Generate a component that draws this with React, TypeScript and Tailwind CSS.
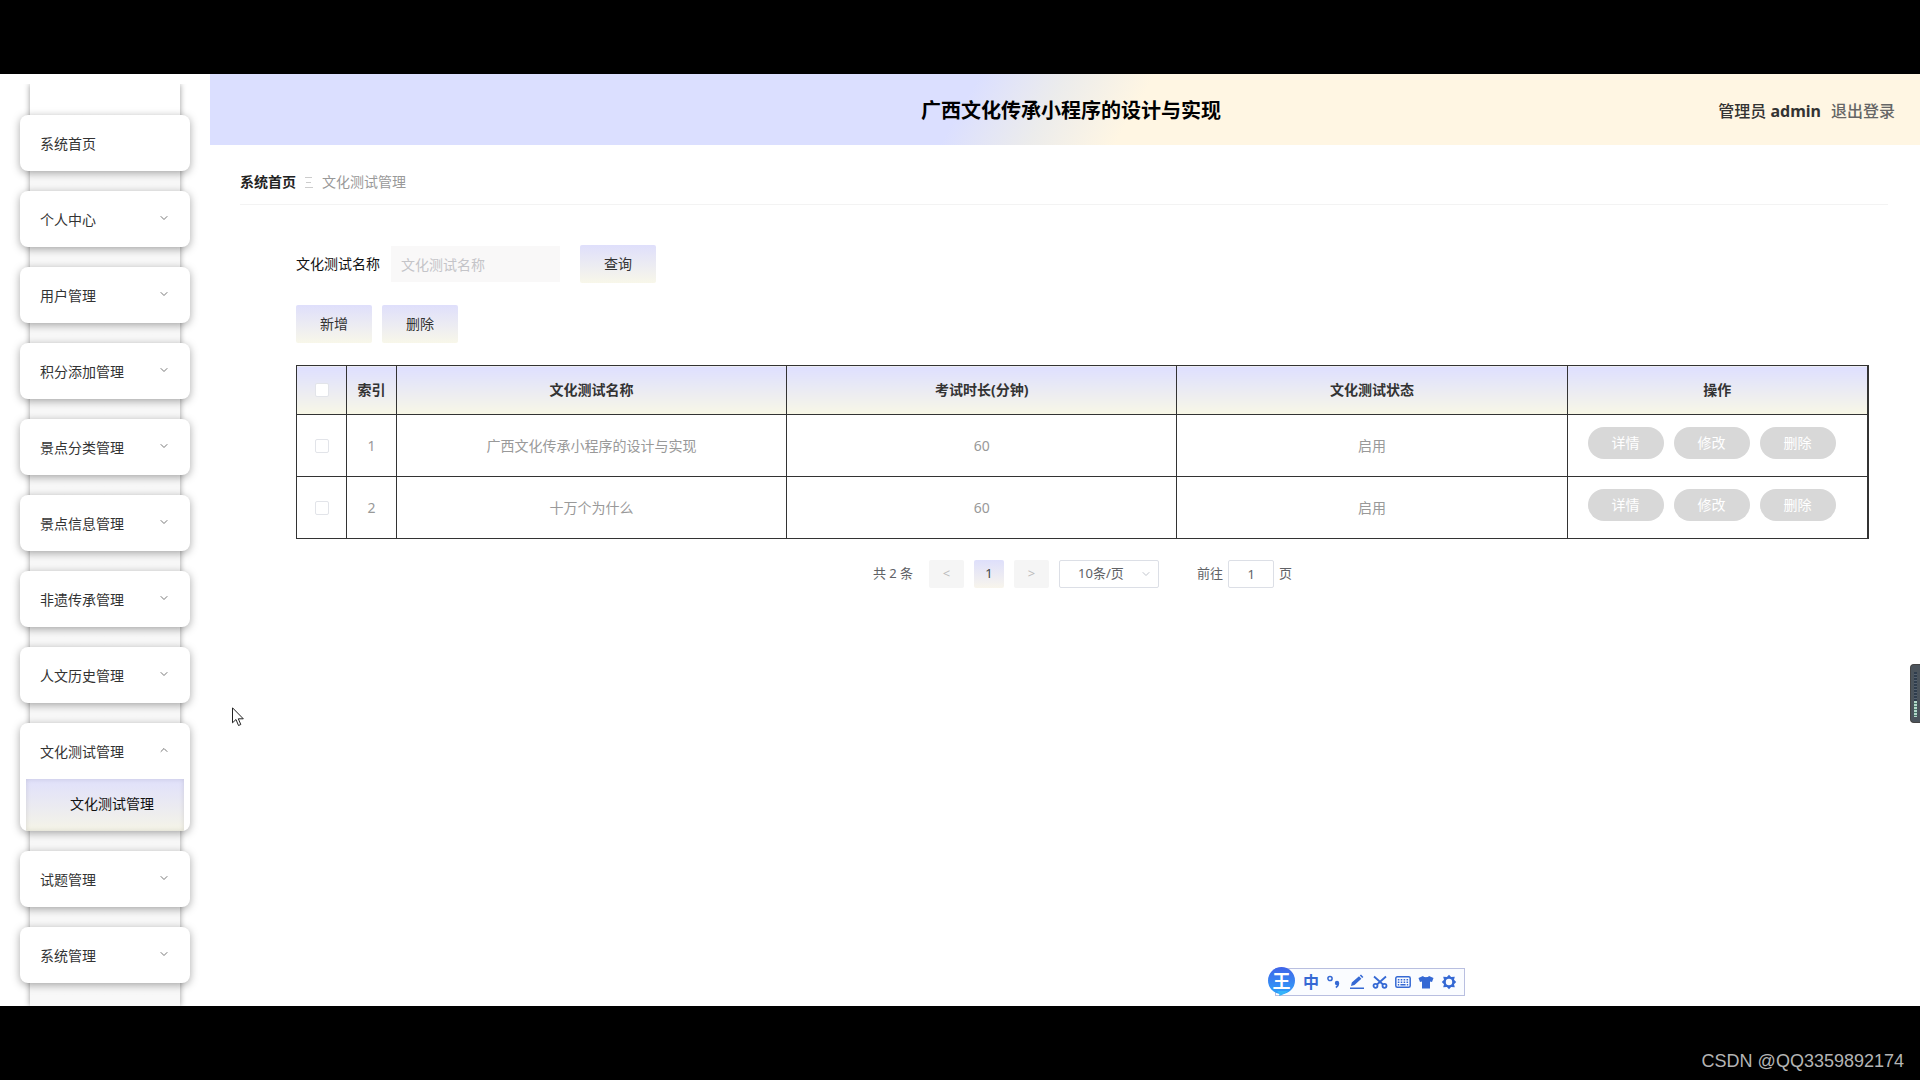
import React from 'react';
import { ChevronDown, ChevronUp } from 'lucide-react';

interface MenuItem {
  label: string;
  children?: string[];
  open?: boolean;
}

interface TestRow {
  id: number;
  name: string;
  duration: number;
  status: string;
}

const menu: MenuItem[] = [
  { label: '系统首页' },
  { label: '个人中心', children: [] },
  { label: '用户管理', children: [] },
  { label: '积分添加管理', children: [] },
  { label: '景点分类管理', children: [] },
  { label: '景点信息管理', children: [] },
  { label: '非遗传承管理', children: [] },
  { label: '人文历史管理', children: [] },
  { label: '文化测试管理', children: ['文化测试管理'], open: true },
  { label: '试题管理', children: [] },
  { label: '系统管理', children: [] },
];

const rows: TestRow[] = [
  { id: 1, name: '广西文化传承小程序的设计与实现', duration: 60, status: '启用' },
  { id: 2, name: '十万个为什么', duration: 60, status: '启用' },
];

const Sidebar: React.FC = () => (
  <aside className="w-[210px] shrink-0 px-[30px] pt-[10px]">
    <nav className="h-full bg-linear-to-b from-white from-0% via-white via-[30px] to-[#f8f8f8] to-[60px] pt-[31px] pb-[23px] shadow-[0_0_6px_rgba(0,0,0,0.4)] [clip-path:inset(0_-20px)]">
      <ul className="-mx-[10px] flex flex-col gap-5">
        {menu.map((item) => (
          <li
            key={item.label}
            className="overflow-hidden rounded-lg bg-white shadow-[0_2px_8px_rgba(0,0,0,0.35)]"
          >
            <button
              type="button"
              className="flex h-14 w-full items-center justify-between pt-[2px] pr-5 pl-5 text-sm text-[#333]"
            >
              {item.label}
              {item.children &&
                (item.open ? (
                  <ChevronUp className="mb-1 h-3 w-3 text-[#777]" strokeWidth={2} />
                ) : (
                  <ChevronDown className="mb-1 h-3 w-3 text-[#777]" strokeWidth={2} />
                ))}
            </button>
            {item.open && (
              <ul className="px-[6px]">
                {item.children?.map((child) => (
                  <li key={child}>
                    <a
                      href="#"
                      className="flex h-[52px] items-center bg-linear-to-b from-[#e0e0fb] to-[#f5f4e7] pb-[2px] pl-11 text-sm text-[#111] shadow-[inset_0_0_5px_rgba(0,0,0,0.12)]"
                    >
                      {child}
                    </a>
                  </li>
                ))}
              </ul>
            )}
          </li>
        ))}
      </ul>
    </nav>
  </aside>
);

const Header: React.FC = () => (
  <header className="grid h-[71px] grid-cols-[1fr_auto_1fr] items-center bg-[linear-gradient(120deg,#dbdfff_44%,#ececec_49%,#fff6e3_54%)] pt-[2px] pr-[25px] pl-[37px]">
    <h1 className="col-start-2 text-xl font-bold text-black">广西文化传承小程序的设计与实现</h1>
    <div className="flex items-center justify-end gap-[10px] text-base">
      <span className="font-medium text-[#333]">
        管理员 <b className="font-bold">admin</b>
      </span>
      <a href="#" className="font-medium text-[#666]">
        退出登录
      </a>
    </div>
  </header>
);

const GradientButton: React.FC<{ children: React.ReactNode }> = ({ children }) => (
  <button
    type="button"
    className="h-[38px] w-[76px] rounded-xs bg-linear-to-b from-[#dfdffb] to-[#f8f7e9] text-sm text-[#333]"
  >
    {children}
  </button>
);

const CheckBox: React.FC<{ label: string }> = ({ label }) => (
  <input
    type="checkbox"
    aria-label={label}
    className="mx-auto block h-[14px] w-[14px] appearance-none rounded-xs border border-[#e2e4e9] bg-white"
  />
);

const TestTable: React.FC = () => (
  <table className="w-full table-fixed border-collapse border border-r-2 border-[#333] text-center text-sm text-[#999]">
    <colgroup>
      <col className="w-[50px]" />
      <col className="w-[50px]" />
      <col />
      <col />
      <col />
      <col className="w-[301px]" />
    </colgroup>
    <thead>
      <tr className="h-[49px] text-[#333] *:border *:border-[#333] *:bg-linear-to-b *:from-[#dedfff] *:to-[#f8f7e6] *:font-bold">
        <th>
          <CheckBox label="全选" />
        </th>
        <th>索引</th>
        <th>文化测试名称</th>
        <th>考试时长(分钟)</th>
        <th>文化测试状态</th>
        <th className="border-r-2!">操作</th>
      </tr>
    </thead>
    <tbody>
      {rows.map((row) => (
        <tr key={row.id} className="h-[62px] *:border *:border-[#333]">
          <td>
            <CheckBox label={row.name} />
          </td>
          <td>{row.id}</td>
          <td>{row.name}</td>
          <td>{row.duration}</td>
          <td>{row.status}</td>
          <td className="border-r-2!">
            <div className="mb-[5px] flex gap-[10px] pl-5">
              {['详情', '修改', '删除'].map((action) => (
                <button
                  key={action}
                  type="button"
                  className="h-8 w-[76px] rounded-full bg-[#d8d8d8] text-sm text-white"
                >
                  {action}
                </button>
              ))}
            </div>
          </td>
        </tr>
      ))}
    </tbody>
  </table>
);

const Pagination: React.FC = () => (
  <div className="mt-[21px] flex h-7 items-center justify-center text-[13px] text-[#606266]">
    <span className="mr-4">共 2 条</span>
    <button type="button" className="h-7 w-[35px] rounded-xs bg-[#f5f5f5] text-[#bbb]">
      &lt;
    </button>
    <button
      type="button"
      className="mx-[10px] h-7 w-[30px] rounded-xs bg-linear-to-b from-[#dedffb] to-[#f8f5ec] text-[#444]"
    >
      1
    </button>
    <button type="button" className="h-7 w-[35px] rounded-xs bg-[#f5f5f5] text-[#bbb]">
      &gt;
    </button>
    <div className="relative ml-[10px]">
      <select
        aria-label="每页条数"
        className="block h-7 w-[100px] appearance-none rounded-xs border border-[#dcdfe6] bg-white pl-[18px] text-[13px]"
      >
        <option>10条/页</option>
      </select>
      <ChevronDown className="pointer-events-none absolute top-2 right-[7px] h-3 w-3 text-[#c0c4cc]" />
    </div>
    <label className="ml-[38px] flex items-center gap-[5px]">
      前往
      <input
        type="text"
        defaultValue="1"
        className="h-7 w-[46px] rounded-xs border border-[#dcdfe6] bg-white text-center"
      />
      页
    </label>
  </div>
);

const ImeBar: React.FC = () => (
  <div className="absolute right-[455px] bottom-[84px] flex h-7 w-[190px] items-center gap-[7px] border border-[#b9bfe0] bg-[#fafcff] pl-[27px] text-[#3569d4]">
    <div className="absolute top-[-2px] -left-2 flex h-[27px] w-[27px] items-center justify-center rounded-full bg-linear-to-b from-[#3f63e8] to-[#2ba0fa] text-lg leading-none font-bold text-white">
      <svg viewBox="0 0 12 6" className="absolute -bottom-[2px] left-[9px] h-[6px] w-3" fill="#36b4fa">
        <path d="M0 1h11C8 4 5 5 2 6c1-1.500 0-3-2-5z" />
      </svg>
      <span className="relative">王</span>
    </div>
    <span className="text-base leading-none font-bold">中</span>
    <svg viewBox="0 0 16 16" className="h-4 w-4" fill="none" stroke="currentColor">
      <circle cx="4" cy="4.500" r="2.100" strokeWidth="1.500" />
      <circle cx="11" cy="9" r="2.200" fill="currentColor" stroke="none" />
      <path d="M12.400 9c0 2.400-.8 3.700-2.600 4.400" strokeWidth="1.600" />
    </svg>
    <svg viewBox="0 0 16 16" className="h-4 w-4" fill="currentColor">
      <path d="M2 12l.8-3.600L10 2.200l2.400 2.600L5.500 11zM10.800 1.500l1.200-1 2.400 2.500-1.200 1.100zM1 13.400h14V15H1z" />
    </svg>
    <svg viewBox="0 0 16 16" className="h-4 w-4" fill="none" stroke="currentColor" strokeWidth="1.800">
      <path d="M2 2.500l9 8M14 2.500l-9 8" />
      <circle cx="3.500" cy="11.800" r="2" />
      <circle cx="12.500" cy="11.800" r="2" />
    </svg>
    <svg viewBox="0 0 16 16" className="h-4 w-4" fill="none" stroke="currentColor" strokeWidth="1.500">
      <rect x="0.800" y="2.800" width="14.400" height="10.400" rx="1.500" />
      <path d="M2.800 5.700h10.400M2.800 8.200h10.400" strokeDasharray="1.600 1.300" />
      <path d="M2.800 10.700h1.400M5.400 10.700h5.200M11.800 10.700h1.400" />
    </svg>
    <svg viewBox="0 0 16 16" className="h-4 w-4" fill="currentColor">
      <path d="M5 2c.8 1.600 5.200 1.600 6 0l4.500 2-1.500 4-2-.5V14.500H4V7.500L2 8 .5 4z" />
    </svg>
    <svg viewBox="0 0 16 16" className="h-4 w-4" fill="currentColor">
      <path
        fillRule="evenodd"
        d="M8 .8l2.100 2.300 3.700-.4-.8 3L15.200 8 13 10.300l.8 3-3.700-.4L8 15.200l-2.100-2.300-3.700.4.8-3L.8 8 3 5.700l-.8-3 3.700.4zM8 4.800a3.200 3.200 0 1 0 0 6.400 3.200 3.200 0 0 0 0-6.400z"
      />
    </svg>
  </div>
);

const VolumeMeter: React.FC = () => (
  <div className="absolute top-[664px] right-0 h-[59px] w-[10px] rounded-l-sm border border-r-0 border-[#444] bg-[#4b545c] px-[3px] pt-[7px]">
    <div className="h-[29px] bg-[repeating-linear-gradient(#2f3d4d_0_2px,#566270_2px_3px)]" />
    <div className="h-4 bg-[repeating-linear-gradient(#b4d8ca_0_2px,#4b7b6c_2px_3px)]" />
  </div>
);

const App: React.FC = () => {
  return (
    <div className="relative flex min-h-screen flex-col bg-black pt-[74px] font-['Noto_Sans','Noto_Sans_CJK_SC',sans-serif]">
      <div className="flex flex-1 bg-white">
        <Sidebar />
        <div className="min-w-0 flex-1">
          <Header />
          <div className="mr-8 ml-[30px] flex h-[60px] items-center gap-[9px] border-b border-[#f3f3f3] pt-[14px] text-sm">
            <a href="#" className="font-bold text-[#222]">
              系统首页
            </a>
            <svg viewBox="0 0 8 12" className="h-3 w-2" stroke="#ccc">
              <path d="M0 1.500h7M1 6.500h5M0 11.500h8" />
            </svg>
            <span className="text-[#999]">文化测试管理</span>
          </div>
          <main className="pt-10 pr-[51px] pl-[86px]">
            <form className="flex items-center">
              <label htmlFor="test-name" className="mr-[11px] text-sm text-[#111]">
                文化测试名称
              </label>
              <input
                id="test-name"
                type="text"
                placeholder="文化测试名称"
                className="mr-5 h-9 w-[169px] bg-[#f9f8f8] px-[10px] text-sm placeholder:text-[#c4c4c8]"
              />
              <GradientButton>查询</GradientButton>
            </form>
            <div className="my-[22px] flex gap-[10px]">
              <GradientButton>新增</GradientButton>
              <GradientButton>删除</GradientButton>
            </div>
            <TestTable />
            <Pagination />
          </main>
        </div>
      </div>
      <footer className="flex h-[74px] items-center justify-end bg-black pt-9 pr-4 font-['Liberation_Sans',sans-serif] text-lg text-[#b4b4b4]">
        CSDN @QQ3359892174
      </footer>
      <ImeBar />
      <VolumeMeter />
      <svg viewBox="0 0 12 20" className="absolute top-[707px] left-[232px] h-5 w-3" fill="white" stroke="#222">
        <path d="M.5.800v15l3.500-3.300 2.500 6 2.300-1-2.500-5.700h5z" />
      </svg>
    </div>
  );
};

export default App;
